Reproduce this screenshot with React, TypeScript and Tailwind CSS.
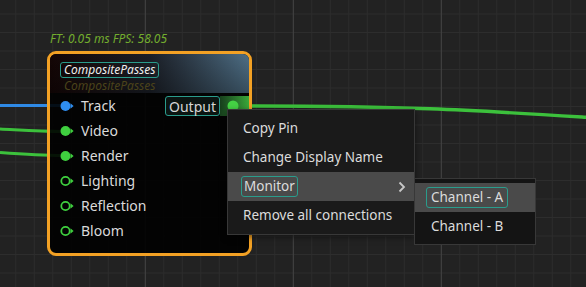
import React from 'react';

const GRID = 18.5;
const vLines = Array.from({ length: 33 }, (_, i) => 15.8 + i * GRID);
const hLines = Array.from({ length: 16 }, (_, i) => 14 + i * GRID);
const majorX = [145.3, 293.3, 441.3];

type Pin = { label: string; kind: 'blue' | 'filled' | 'hollow' };

const inputs: Pin[] = [
  { label: 'Track', kind: 'blue' },
  { label: 'Video', kind: 'filled' },
  { label: 'Render', kind: 'filled' },
  { label: 'Lighting', kind: 'hollow' },
  { label: 'Reflection', kind: 'hollow' },
  { label: 'Bloom', kind: 'hollow' },
];

const PinIcon: React.FC<{ kind: Pin['kind'] }> = ({ kind }) => {
  const color = kind === 'blue' ? '#2f8ef0' : '#3fcf3f';
  return (
    <svg width="15" height="12" viewBox="0 0 15 12" className="shrink-0">
      {kind === 'hollow' ? (
        <circle cx="5.5" cy="6" r="4.2" fill="none" stroke={color} strokeWidth="1.8" />
      ) : (
        <circle cx="5.5" cy="6" r="5" fill={color} />
      )}
      <path d="M10.5 3.2 L13.6 6 L10.5 8.8 Z" fill={color} />
    </svg>
  );
};

const Canvas: React.FC = () => (
  <svg className="absolute inset-0" width="586" height="287">
    {vLines.map((x) => (
      <line key={'v' + x} x1={x} y1="0" x2={x} y2="287" stroke="#2d2d2d" strokeWidth="1" />
    ))}
    {hLines.map((y) => (
      <line key={'h' + y} x1="0" y1={y} x2="586" y2={y} stroke="#2d2d2d" strokeWidth="1" />
    ))}
    {majorX.map((x) => (
      <line key={'m' + x} x1={x} y1="0" x2={x} y2="287" stroke="#444444" strokeWidth="1" />
    ))}
    {/* wires */}
    <path d="M0 105.5 L62 105.5" stroke="#2f8ae6" strokeWidth="3" fill="none" />
    <path d="M0 129 C20 130 40 131.5 62 131.5" stroke="#3cc13c" strokeWidth="3.2" fill="none" />
    <path d="M0 152.5 C20 154 40 155.5 62 155.5" stroke="#3cc13c" strokeWidth="3.2" fill="none" />
    <path d="M238 106 C410 106 470 110 590 117.5" stroke="#3cc13c" strokeWidth="3.4" fill="none" />
  </svg>
);

const Node: React.FC = () => (
  <div className="absolute left-[47px] top-[51px] w-[205px] h-[205px] rounded-[9px] border-[3px] border-[#f3a124] bg-black/90 overflow-hidden">
    <div className="relative h-[39px] bg-gradient-to-r from-[#140606] via-[#1b1f27] to-[#4e6f86] px-[10px] pt-[8px]">
      <div className="absolute inset-0 bg-gradient-to-b from-transparent to-black/30" />
      <div className="relative flex w-fit h-[16px] items-center rounded-[3px] border border-[#2a9c8c] px-[3px] text-[12px] italic leading-none text-[#eeeeee]">
        CompositePasses
      </div>
      <div className="relative mt-[2px] pl-[4px] text-[12px] italic leading-[11px] text-[#4b431a]">CompositePasses</div>
    </div>
    <div className="flex flex-col">
      {inputs.map((p, i) => (
        <div key={p.label} className="relative flex h-[25px] items-center pl-[10px]">
          <PinIcon kind={p.kind} />
          <span className="ml-[6px] text-[14px] text-[#dadada]">{p.label}</span>
          {i === 0 && (
            <div className="absolute right-0 top-[3px] flex h-[20px] items-center">
              <div className="flex h-[20px] items-center rounded-[3px] border border-[#2a9c8c] bg-[#0b1512] px-[3px] text-[14px] text-[#d6d6d6]">
                Output
              </div>
              <div className="flex h-[20px] w-[29px] items-center bg-gradient-to-r from-[#173f1c] to-[#3aa93a] pl-[7px]">
                <svg width="14" height="12" viewBox="0 0 14 12">
                  <circle cx="6" cy="6" r="5.5" fill="#45d245" />
                </svg>
              </div>
            </div>
          )}
        </div>
      ))}
    </div>
  </div>
);

const App: React.FC = () => {
  return (
    <div className="relative w-[586px] h-[287px] overflow-hidden bg-[#222222] font-['Noto_Sans',sans-serif]">
      <Canvas />
      <div className="absolute left-[50px] top-[30px] text-[12px] italic text-[#73ad2e]">FT: 0.05 ms FPS: 58.05</div>
      <Node />

      <div className="absolute left-[227px] top-[109px] w-[188px] border border-[#383838] bg-[#1a1a1a] py-[4px] text-[13.5px] text-[#dcdcdc] shadow-[0_2px_6px_rgba(0,0,0,0.5)]">
        <div className="flex h-[29px] items-center pl-[15px]">Copy Pin</div>
        <div className="flex h-[29px] items-center pl-[15px]">Change Display Name</div>
        <div className="flex h-[29px] items-center justify-between bg-[#4a4a4a] pl-[13px] pr-[8px]">
          <span className="flex h-[21px] items-center rounded-[3px] border border-[#2a9c8c] px-[2px]">Monitor</span>
          <svg width="8" height="12" viewBox="0 0 8 12">
            <path d="M1.5 1.5 L6 6 L1.5 10.5" stroke="#c8c8c8" strokeWidth="1.8" fill="none" />
          </svg>
        </div>
        <div className="flex h-[29px] items-center pl-[15px]">Remove all connections</div>
      </div>

      <div className="absolute left-[414px] top-[178px] w-[122px] border border-[#383838] bg-[#141414] pt-[4px] pb-[3px] text-[13.5px] text-[#dcdcdc]">
        <div className="flex h-[29px] items-center bg-[#4a4a4a] pl-[11px]">
          <span className="flex h-[21px] items-center rounded-[3px] border border-[#2a9c8c] px-[4px]">Channel - A</span>
        </div>
        <div className="flex h-[29px] items-center pl-[16px]">Channel - B</div>
      </div>
    </div>
  );
};

export default App;
